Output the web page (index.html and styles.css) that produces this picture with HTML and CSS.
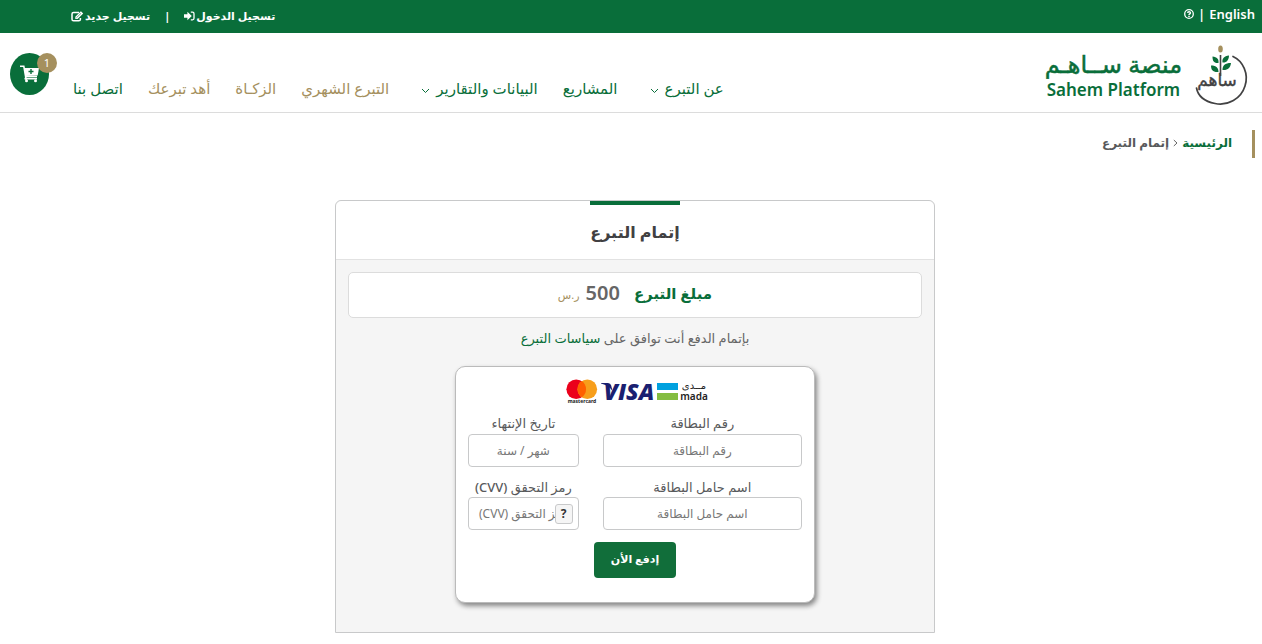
FILE: index.html
```html
<!DOCTYPE html>
<html lang="ar" dir="rtl">
<head>
<meta charset="utf-8">
<meta name="viewport" content="width=device-width, initial-scale=1">
<title>إتمام التبرع</title>
<link rel="stylesheet" href="styles.css">
</head>
<body>
<div class="topbar">
  <div class="lang">
    <a href="#en">English</a>
    <span>|</span>
    <a href="#help" aria-label="المساعدة">
      <svg width="10" height="10" viewBox="0 0 10 10" fill="none" stroke="#fff"><circle cx="5" cy="5" r="4.3" stroke-width="1.3"/><path d="M3.6 3.9C3.7 2.2 6.5 2.3 6.4 3.9C6.4 4.8 5 4.8 5 6M5 6.7V7.9" stroke-width="1.5"/></svg>
    </a>
  </div>
  <div class="account">
    <a href="#login">تسجيل الدخول<svg width="11" height="10" viewBox="0 0 11 10"><path d="M0 3.2H3.4V.8L7.8 5L3.4 9.200V6.800H0Z" fill="#fff"/><path d="M6.800 1.200H8.500Q10 1.200 10 2.700V7.300Q10 8.800 8.500 8.800H6.800" fill="none" stroke="#fff" stroke-width="1.300"/></svg></a>
    <span>|</span>
    <a href="#register">تسجيل جديد <svg width="13" height="11" viewBox="0 0 13 11"><path d="M8 1.5H2.6Q1 1.5 1 3.1V8.2Q1 9.8 2.6 9.8H7.8Q9.4 9.8 9.4 8.2V7" fill="none" stroke="#fff" stroke-width="1.5"/><path d="M4.3 8V5.8L9.9.2L12.2 2.5L6.6 8Z" fill="#fff"/><path d="M5.4 6.8L10 2.3" stroke="#096e3a" stroke-width=".6"/></svg></a>
  </div>
</div>

<header class="header">
  <a class="brand" href="#home">
    <svg class="brand-mark" width="54" height="62" viewBox="0 0 54 62" role="img" aria-label="ساهم">
      <path d="M39 11.5C49 16 55 29 51 41C47 54 34 61 21 58.500C11 56.500 4 51 2.500 43" fill="none" stroke="#424243" stroke-width="1.700" stroke-linecap="round"/>
      <path d="M26.500 10V31" stroke="#424243" stroke-width="1.600"/>
      <ellipse cx="26.500" cy="4" rx="2.300" ry="3.600" fill="#a5905e"/>
      <path d="M24.500 18C20 18.500 18.500 16 18.500 11.500C23 12 25 14 24.500 18ZM24.500 27C19 27.500 17 25 17 20.500C22.500 20.500 24.500 23 24.500 27ZM28.500 17.500C28 13.500 30 11 35 10.500C35 15 32.500 18 28.500 17.500ZM28.500 25C28.500 20.500 31 18 37 18C36.500 23 33.500 25.500 28.500 25Z" fill="#096e3a"/>
      <text class="mark-word" x="23" y="41" text-anchor="middle">ساهم</text>
    </svg>
    <span class="brand-name"><span class="brand-ar">منصة ســاهـم</span><span class="brand-en" dir="ltr">Sahem Platform</span></span>
  </a>
  <div class="header-end">
    <nav class="nav">
      <a class="drop" href="#about">عن التبرع <svg width="9" height="6" viewBox="0 0 9 6"><path d="M1 1L4.500 4.500L8 1" fill="none" stroke="#096e3a"/></svg></a>
      <a href="#projects">المشاريع</a>
      <a class="drop" href="#reports">البيانات والتقارير <svg width="9" height="6" viewBox="0 0 9 6"><path d="M1 1L4.500 4.500L8 1" fill="none" stroke="#096e3a"/></svg></a>
      <a class="gold" href="#monthly">التبرع الشهري</a>
      <a class="gold" href="#zakat">الزكـاة</a>
      <a class="gold" href="#gift">أهد تبرعك</a>
      <a href="#contact">اتصل بنا</a>
    </nav>
    <a class="cart" href="#cart" aria-label="السلة">
      <svg width="20" height="18" viewBox="0 0 20 18"><path d="M0 1.200H3.800L6.200 14.800M5 11.500H17" fill="none" stroke="#fff" stroke-width="1.600"/><path d="M4.200 3H19L17.700 10.500L5.300 11Z" fill="#fff"/><path d="M4.500 12.800H17V14.500H4.500Z" fill="#fff"/><circle cx="6.500" cy="15.700" r="1.500" fill="#fff"/><circle cx="15.500" cy="15.700" r="1.500" fill="#fff"/><path d="M11 4V9M8.500 6.500H13.500" stroke="#096e3a" stroke-width="1.400"/></svg>
      <span class="badge">1</span>
    </a>
  </div>
</header>

<main>
  <div class="crumbs"><a href="#home">الرئيسية</a><svg width="5" height="8" viewBox="0 0 5 8"><path d="M.8 1L4 4L.8 7" fill="none" stroke="#666"/></svg><span>إتمام التبرع</span></div>

  <div class="content">
    <section class="panel">
      <h1 class="panel-title">إتمام التبرع</h1>
      <div class="panel-body">
        <div class="amount"><span class="amount-label">مبلغ التبرع</span><span class="amount-value">500</span><span class="amount-unit">ر.س</span></div>
        <p class="terms">بإتمام الدفع أنت توافق على <a href="#policy">سياسات التبرع</a></p>
        <form class="pay">
          <svg class="schemes" width="142" height="27" viewBox="0 0 142 27" role="img" aria-label="mada, VISA, mastercard">
            <circle cx="10.200" cy="10.200" r="9.800" fill="#eb001b"/>
            <circle cx="21.300" cy="10.200" r="9.800" fill="#f79e1b"/>
            <path d="M15.750 2.100A9.800 9.800 0 0 1 15.750 18.300A9.800 9.800 0 0 1 15.750 2.100Z" fill="#ff5f00"/>
            <text class="mc-word" x="16" y="24" text-anchor="middle">mastercard</text>
            <text class="visa-word" x="63" y="21" text-anchor="middle">VISA</text>
            <path d="M35 4H42Q44.500 4 45.200 6.500L46.500 12Q43 6.500 35 4.600Z" fill="#1a1f71"/>
            <path d="M91 4H112V11H91Z" fill="#00a1df"/>
            <path d="M91 14H112V21H91Z" fill="#84bd41"/>
            <text class="mada-ar" x="128" y="10" text-anchor="middle">مــدى</text>
            <text class="mada-en" x="128" y="21" text-anchor="middle">mada</text>
          </svg>
          <div class="fields">
            <div class="field"><label for="number">رقم البطاقة</label><input id="number" type="text" placeholder="رقم البطاقة"></div>
            <div class="field"><label for="expiry">تاريخ الإنتهاء</label><input id="expiry" type="text" placeholder="شهر / سنة"></div>
            <div class="field"><label for="holder">اسم حامل البطاقة</label><input id="holder" type="text" placeholder="اسم حامل البطاقة"></div>
            <div class="field"><label for="cvv">رمز التحقق (CVV)</label><div class="cvv"><input id="cvv" type="text" placeholder="رمز التحقق (CVV)"><button class="hint" type="button">?</button></div></div>
          </div>
          <button class="submit" type="submit">إدفع الأن</button>
        </form>
      </div>
    </section>
  </div>
</main>
</body>
</html>
```

FILE: styles.css
```css
* { box-sizing: border-box; }
body {
  margin: 0;
  background: #fff;
  color: #58595b;
  font: 14px/20px "Noto Sans", "DejaVu Sans", sans-serif;
}
a { color: inherit; text-decoration: none; }
svg { flex: none; overflow: visible; }

.topbar {
  display: flex;
  justify-content: space-between;
  height: 33px;
  padding: 0 7px;
  background: #096e3a;
  color: #fff;
  font-weight: 600;
}
.lang { display: flex; align-items: center; gap: 4px; height: 27px; font-size: 13px; }
.lang a { display: flex; }
.account { display: flex; align-items: center; gap: 14px; height: 32px; padding-left: 64px; font-size: 11px; font-weight: 700; }
.account a { display: flex; align-items: center; gap: 1px; }

.header {
  display: flex;
  justify-content: space-between;
  height: 80px;
  padding: 0 14px 0 10px;
  border-bottom: 1px solid #dcdcdc;
  color: #096e3a;
}
.brand { display: flex; align-items: flex-start; gap: 12px; padding-top: 12px; }
.mark-word { font: 17px "Noto Sans", "DejaVu Sans", sans-serif; fill: #424243; stroke: #424243; stroke-width: .4px; }
.brand-name { display: flex; flex-direction: column; align-items: center; padding-top: 6px; }
.brand-ar { font-size: 24px; line-height: 26px; -webkit-text-stroke: .5px #096e3a; }
.brand-en { font: 600 17px/26px "Noto Sans", sans-serif; }
.header-end { display: flex; align-items: flex-start; gap: 16px; padding-top: 20px; }
.nav { display: flex; gap: 25px; padding-top: 23px; font-size: 15px; line-height: 24px; white-space: nowrap; }
.nav a { display: flex; align-items: center; }
.nav .drop { gap: 6px; padding-left: 7px; }
.nav .drop svg { margin-top: 6px; }
.nav .gold { color: #a5905e; }
.cart {
  position: relative;
  display: flex;
  align-items: center;
  justify-content: center;
  width: 39px;
  height: 42px;
  margin-right: 8px;
  border-radius: 50%;
  background: #096e3a;
}
.badge {
  position: absolute;
  top: 0;
  right: -8px;
  width: 20px;
  height: 20px;
  border-radius: 50%;
  background: #a5905e;
  color: #fff;
  font-size: 11px;
  line-height: 20px;
  text-align: center;
}

.crumbs {
  display: flex;
  align-items: center;
  gap: 4px;
  height: 28px;
  margin: 17px 7px 0;
  padding: 0 20px 3px 0;
  border-right: 3px solid #a5905e;
  font-size: 12px;
  font-weight: 600;
}
.crumbs a { color: #096e3a; font-weight: 700; }

.content { padding: 42px 0 11px 8px; }
.panel {
  max-width: 600px;
  margin: 0 auto;
  border: 1px solid #c8c9ca;
  border-radius: 6px 6px 0 0;
  background: #f5f5f5;
}
.panel-title {
  display: flex;
  flex-direction: column;
  align-items: center;
  gap: 14px;
  height: 59px;
  margin: 0;
  border-bottom: 1px solid #e2e2e2;
  border-radius: 6px 6px 0 0;
  background: #fff;
  color: #414042;
  font-size: 16px;
  line-height: 26px;
}
.panel-title::before { content: ""; width: 90px; height: 4px; background: #096e3a; }
.panel-body { padding: 12px 12px 29px; }
.amount {
  display: flex;
  align-items: center;
  justify-content: center;
  height: 46px;
  padding-bottom: 4px;
  border: 1px solid #dcdcdc;
  border-radius: 5px;
  background: #fff;
}
.amount-label { margin-left: 14px; color: #096e3a; font-size: 15px; font-weight: 700; }
.amount-value { margin-left: 6px; color: #666; font-size: 20px; font-weight: 600; }
.amount-unit { padding-top: 4px; color: #a5905e; font-size: 11px; }
.terms { margin: 10px 0 18px; color: #666; font-size: 13px; text-align: center; }
.terms a { color: #096e3a; }

.pay {
  display: flex;
  flex-direction: column;
  align-items: center;
  width: 360px;
  max-width: 100%;
  margin: 0 auto;
  padding: 12px 12px 24px;
  border: 1px solid #bbb;
  border-radius: 10px;
  background: #fff;
  box-shadow: 2px 3px 5px rgba(0, 0, 0, .45);
}
.schemes { margin-left: 4px; }
.mc-word { font: 700 5px "Noto Sans", sans-serif; fill: #222; }
.visa-word { font: italic 800 23px "Open Sans", sans-serif; fill: #1a1f71; }
.mada-ar { font: 10px "Noto Sans", "DejaVu Sans", sans-serif; fill: #222; }
.mada-en { font: 600 10px "Noto Sans", sans-serif; fill: #222; }
.fields {
  display: grid;
  grid-template-columns: 9fr 5fr;
  gap: 10px 24px;
  width: 100%;
  margin: 7px 0 12px;
}
.field { display: flex; flex-direction: column; text-align: center; }
.field label { padding-bottom: 1px; font-size: 13px; font-weight: 500; color: #58595b; }
.fields .field + .field + .field label { padding-bottom: 0; }
.field input {
  width: 100%;
  height: 33px;
  padding: 4px;
  border: 1px solid #c8c9ca;
  border-radius: 4px;
  background: #fff;
  color: #58595b;
  font: 12px "Noto Sans", "DejaVu Sans", sans-serif;
  text-align: center;
}
.field input::placeholder { color: #777; }
.cvv { position: relative; }
.hint {
  position: absolute;
  top: 7px;
  right: 6px;
  width: 18px;
  height: 20px;
  padding: 0;
  border: 1px solid #c8c9ca;
  border-radius: 3px;
  background: #f5f5f5;
  color: #333;
  font: 700 12px/16px "Noto Sans", sans-serif;
}
.submit {
  width: 82px;
  height: 36px;
  padding: 0 0 4px;
  border: 0;
  border-radius: 4px;
  background: #116e3a;
  color: #fff;
  font: 700 11px "Noto Sans", "DejaVu Sans", sans-serif;
}
```
